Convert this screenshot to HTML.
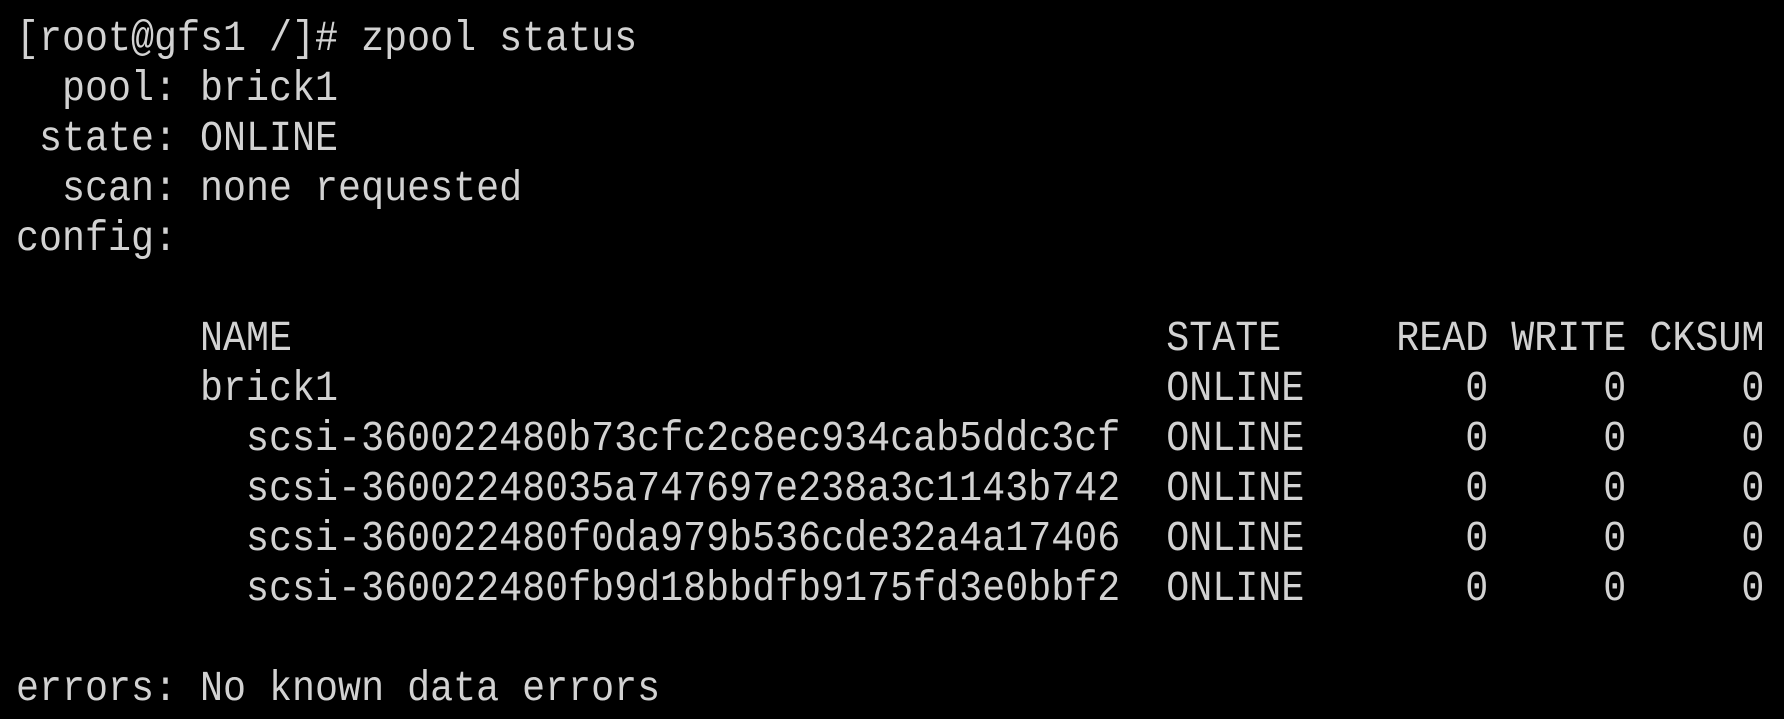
<!DOCTYPE html>
<html><head><meta charset="utf-8"><style>
html,body{margin:0;padding:0;background:#000;width:1784px;height:719px;overflow:hidden}
pre{position:absolute;left:16px;top:14px;margin:0;font-family:"Liberation Mono","DejaVu Sans Mono",monospace;font-size:43px;line-height:50px;color:#d2d2d2;transform:scaleX(0.8915);transform-origin:0 0;white-space:pre}
</style></head><body>
<pre>[root@gfs1 /]# zpool status
  pool: brick1
 state: ONLINE
  scan: none requested
config:

        NAME                                      STATE     READ WRITE CKSUM
        brick1                                    ONLINE       0     0     0
          scsi-360022480b73cfc2c8ec934cab5ddc3cf  ONLINE       0     0     0
          scsi-36002248035a747697e238a3c1143b742  ONLINE       0     0     0
          scsi-360022480f0da979b536cde32a4a17406  ONLINE       0     0     0
          scsi-360022480fb9d18bbdfb9175fd3e0bbf2  ONLINE       0     0     0

errors: No known data errors</pre>
</body></html>
